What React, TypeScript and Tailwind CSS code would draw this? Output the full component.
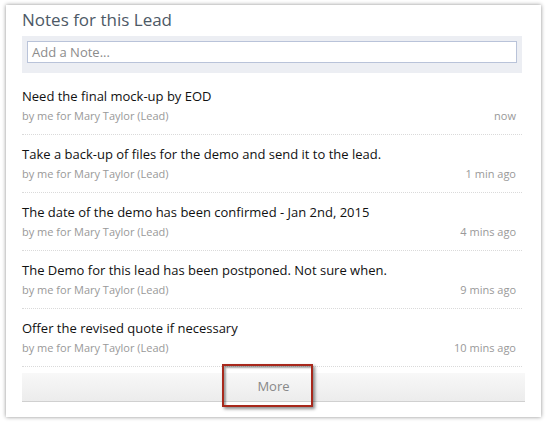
import React from "react";

const notes = [
  { text: "Need the final mock-up by EOD", time: "now" },
  { text: "Take a back-up of files for the demo and send it to the lead.", time: "1 min ago" },
  { text: "The date of the demo has been confirmed - Jan 2nd, 2015", time: "4 mins ago" },
  { text: "The Demo for this lead has been postponed. Not sure when.", time: "9 mins ago" },
  { text: "Offer the revised quote if necessary", time: "10 mins ago" },
];

export default function App() {
  return (
    <div
      className="w-[548px] h-[424px] bg-white relative"
      style={{ fontFamily: '"Open Sans", "Noto Sans", sans-serif' }}
    >
      <div className="absolute left-[6px] top-[5px] w-[535px] h-[412px] bg-white shadow-[0_0_4px_rgba(0,0,0,0.45)]">
        <div className="pl-4 flex flex-col w-[516px]">
          <div className="text-[17px] leading-[24px] text-[#4d5966] mt-[3px]">Notes for this Lead</div>
          <div className="mt-[4px] h-[37px] bg-[#eceef3] px-[5px] pt-[5px]">
            <div className="h-[22px] border border-[#b9c3d9] bg-white px-[4px] text-[13px] leading-[20px] text-[#8c8c8c]">
              Add a Note...
            </div>
          </div>
          <div className="flex flex-col w-[500px] mt-[4px]">
            {notes.map((n, i) => (
              <div key={i} className="pt-[10px] pb-[10px] border-b border-dotted border-[#dadada]">
                <div className="text-[13px] leading-[18px] text-[#111]">{n.text}</div>
                <div className="flex justify-between pr-[6px] mt-[3px] text-[11px] leading-[16px] text-[#999]">
                  <span>by me for Mary Taylor (Lead)</span>
                  <span>{n.time}</span>
                </div>
              </div>
            ))}
          </div>
          <div className="mt-[6px] w-[503px] h-[29px] bg-gradient-to-b from-[#f8f8f8] to-[#ececec] border-b border-[#d0d0d0] flex items-center justify-center text-[13px] text-[#888]">
            More
          </div>
        </div>
      </div>
      <div className="absolute left-[222px] top-[364px] w-[91px] h-[43px] border-2 border-[#a8291c] shadow-[2px_2px_3px_rgba(0,0,0,0.45),inset_2px_2px_2px_rgba(0,0,0,0.35)]" />
    </div>
  );
}
